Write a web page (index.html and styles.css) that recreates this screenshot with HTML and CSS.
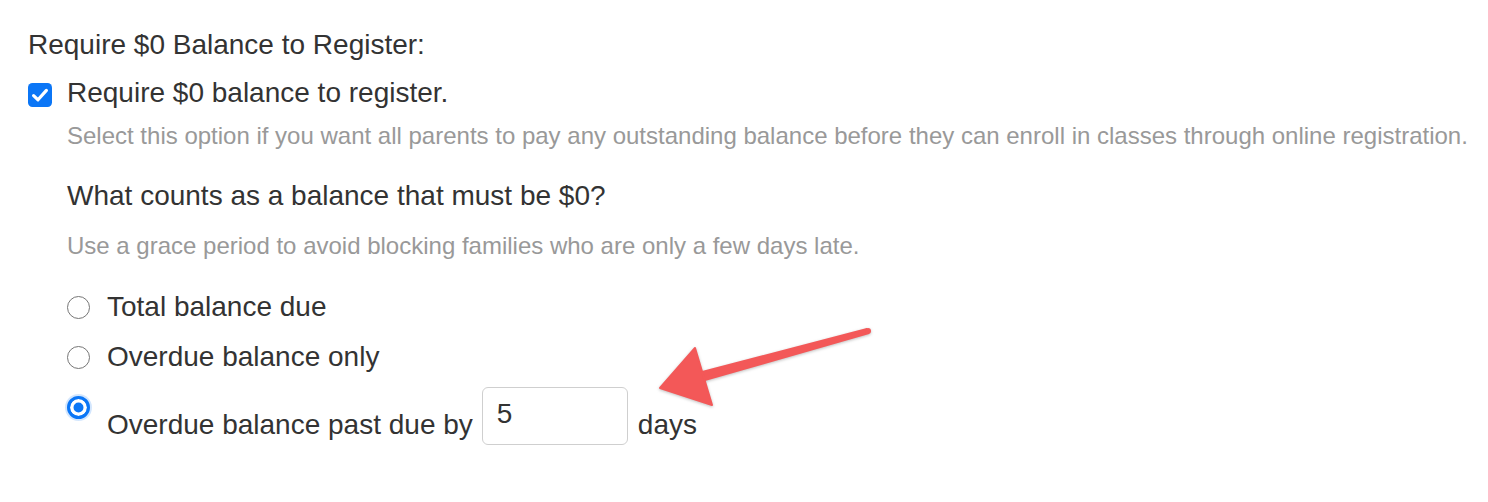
FILE: index.html
```html
<!DOCTYPE html>
<html lang="en">
<head>
<meta charset="utf-8">
<title>Require $0 Balance</title>
<link rel="stylesheet" href="styles.css">
</head>
<body>
<div class="page">
  <div class="field-title">Require $0 Balance to Register:</div>
  <label class="check-row">
    <span class="checkbox" aria-hidden="true">
      <svg viewBox="0 0 24 24" width="24" height="24">
        <rect x="0" y="0" width="24" height="24" rx="4.5" fill="#0b76f6"/>
        <path d="M5.6 12.6 L10 16.8 L18.4 7.4" fill="none" stroke="#fff" stroke-width="3.2" stroke-linecap="round" stroke-linejoin="round"/>
      </svg>
    </span>
    <span class="check-label">Require $0 balance to register.</span>
  </label>
  <div class="details">
    <p class="help">Select this option if you want all parents to pay any outstanding balance before they can enroll in classes through online registration.</p>
    <h3 class="question">What counts as a balance that must be $0?</h3>
    <p class="help grace">Use a grace period to avoid blocking families who are only a few days late.</p>
    <div class="options">
      <label class="radio-row">
        <input type="radio" name="bal" class="radio">
        <span class="radio-label">Total balance due</span>
      </label>
      <label class="radio-row">
        <input type="radio" name="bal" class="radio">
        <span class="radio-label">Overdue balance only</span>
      </label>
      <label class="radio-row">
        <input type="radio" name="bal" class="radio" checked>
        <span class="radio-label">Overdue balance past due by</span>
        <input type="text" class="days-input" value="5">
        <span class="radio-label">days</span>
      </label>
    </div>
  </div>
  <svg class="arrow" width="240" height="100" viewBox="640 315 240 100" aria-hidden="true">
    <polygon points="869.2,334 866.8,328 702,371 705,381" fill="#f35858"/>
    <circle cx="868" cy="331" r="3" fill="#f35858"/>
    <polygon points="660,388 695,348 712,405" fill="#f35858" stroke="#f35858" stroke-width="2" stroke-linejoin="round"/>
  </svg>
</div>
</body>
</html>
```
FILE: styles.css
```css
* { box-sizing: border-box; }
html, body { margin: 0; padding: 0; background: #fff; }
body {
  font-family: "Liberation Sans", Arial, Helvetica, sans-serif;
  color: #333;
}
.page {
  position: relative;
  padding: 25px 0 0 28px;
}
.field-title {
  font-size: 28px;
  line-height: 40px;
}
.check-row {
  display: flex;
  align-items: center;
  gap: 15px;
  margin-top: 8px;
  height: 40px;
}
.checkbox {
  display: block;
  width: 24px;
  height: 24px;
  margin-top: 3px;
}
.checkbox svg { display: block; }
.check-label {
  font-size: 28px;
  line-height: 40px;
}
.details {
  padding-left: 39px;
}
.help {
  margin: 0;
  font-size: 24px;
  line-height: 30px;
  color: #999;
}
.details > .help:first-child { margin-top: 8px; }
.question {
  margin: 25px 0 0;
  font-size: 28px;
  line-height: 40px;
  font-weight: normal;
  color: #333;
}
.grace { margin-top: 15px; }
.options {
  display: flex;
  flex-direction: column;
  gap: 10px;
  margin-top: 26px;
}
.radio-row {
  display: flex;
  align-items: flex-end;
}
.radio {
  appearance: none;
  -webkit-appearance: none;
  margin: 8.5px 17px 0 0;
  align-self: flex-start;
  width: 23px;
  height: 23px;
  border-radius: 50%;
  border: 1.6px solid #767676;
  background: #fff;
  flex: none;
}
.radio:checked {
  border: 3px solid #0b76f6;
  background: #0b76f6;
  box-shadow: inset 0 0 0 3.5px #fff, 0 0 0 2px rgba(11, 118, 246, 0.18);
}
.radio-label {
  font-size: 28px;
  line-height: 40px;
}
.days-input {
  width: 146px;
  height: 58px;
  margin: 0 10px 0 9px;
  padding: 0 0 4px 14px;
  border: 1.5px solid #cfcfcf;
  border-radius: 6px;
  font-family: inherit;
  font-size: 28px;
  color: #333;
  background: #fff;
  outline: none;
}
.arrow {
  position: absolute;
  left: 640px;
  top: 315px;
  overflow: visible;
  filter: drop-shadow(0 1px 1.5px rgba(0,0,0,0.25));
}
```
